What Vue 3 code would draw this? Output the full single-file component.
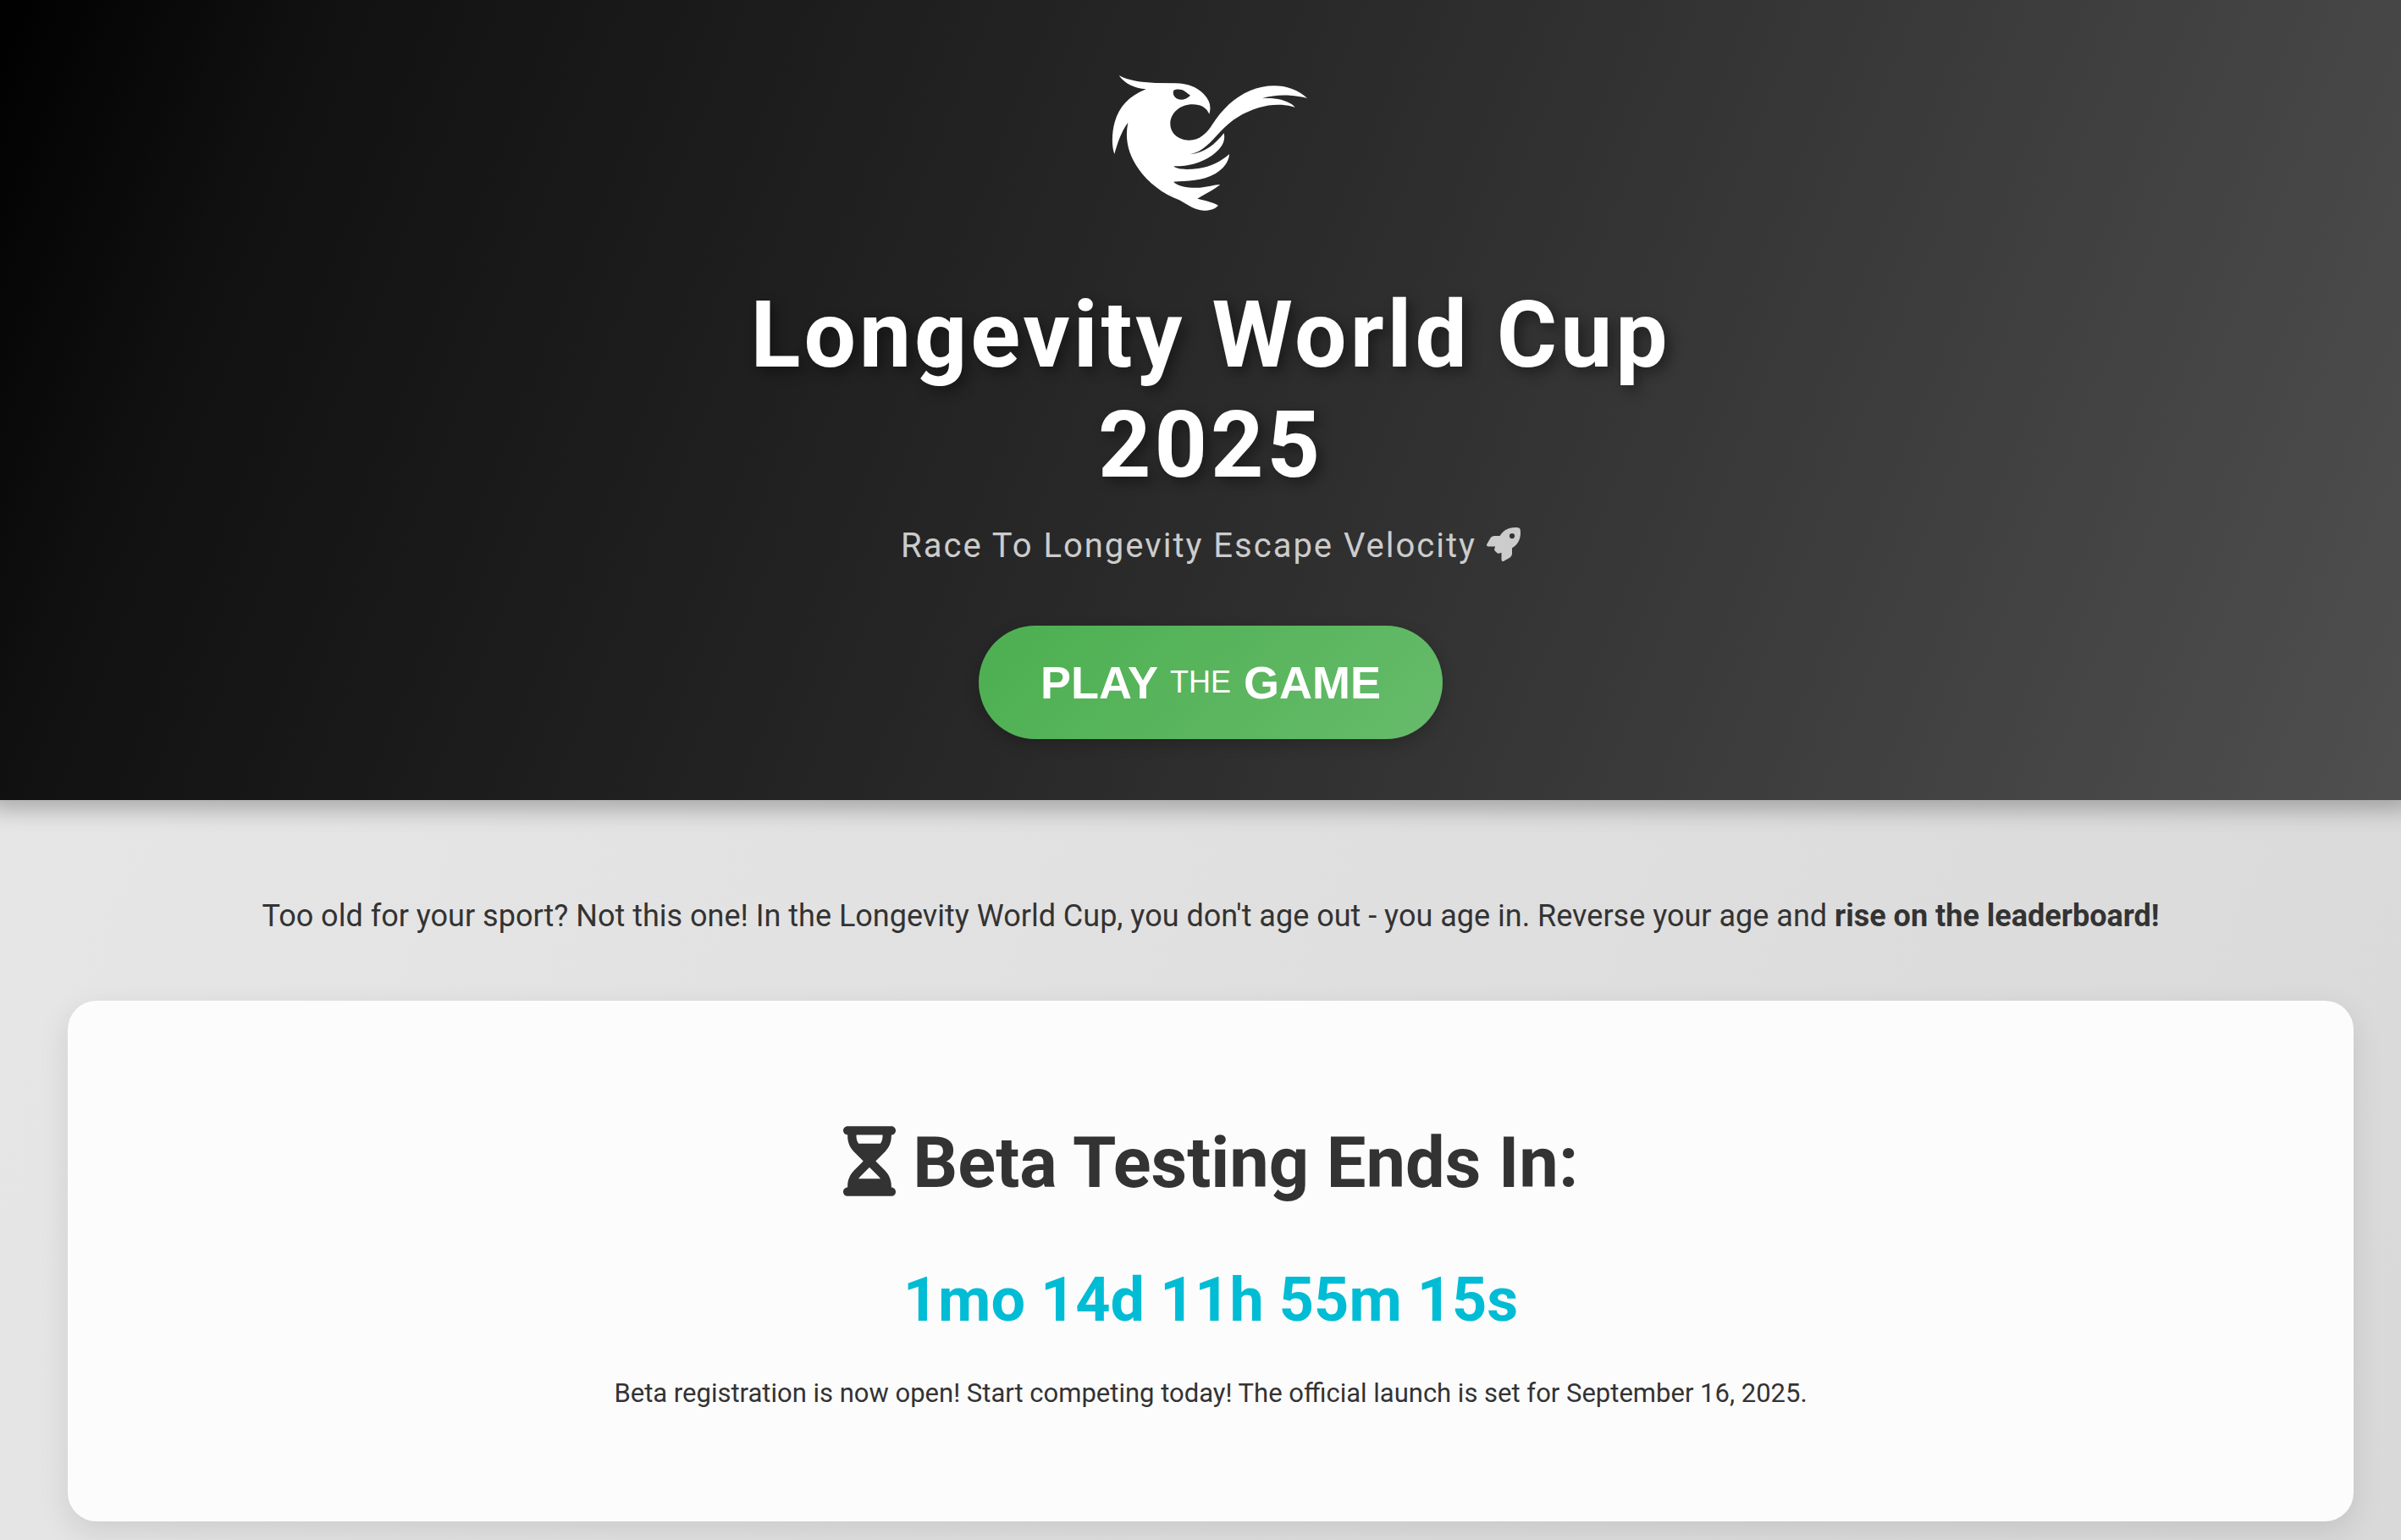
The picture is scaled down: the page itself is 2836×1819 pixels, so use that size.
<script setup>
import { ref, computed } from 'vue'

const remaining = ref({ mo: 1, d: 14, h: 11, m: 55, s: 15 })

const countdown = computed(() =>
  Object.entries(remaining.value)
    .map(([unit, value]) => `${value}${unit}`)
    .join(' '),
)
</script>

<template>
  <div class="page">
    <header class="hero">
      <svg class="logo" viewBox="60 6 720 561" role="img" aria-label="Longevity World Cup logo">
        <!-- head and body -->
        <path
          fill="#fff"
          fill-rule="evenodd"
          d="M95 57 C130 76 170 81 225 84 L295 85 C340 86 372 99 396 124 C417 146 423 168 415 194
            C405 171 385 160 356 160 C312 160 277 190 277 229 C277 262 305 287 343 287
            C382 287 407 261 426 231 C461 177 503 136 560 111 C607 91 664 88 706 104
            C730 113 748 123 762 138 C712 126 655 122 602 139 C645 134 699 145 719 170
            C678 157 632 159 592 171 C536 188 493 215 455 256 C421 293 392 329 346 337
            C400 333 436 300 467 262 C475 295 452 321 423 342 C384 369 335 380 289 379
            C302 392 340 391 376 387 C421 381 456 362 486 336 C485 364 464 389 436 406
            C391 432 339 431 288 434 C305 452 346 457 382 455 C408 453 431 445 454 444
            C431 463 398 478 373 494 C397 500 427 506 447 518 C434 532 415 536 397 536
            C362 536 337 514 309 499 C250 477 197 435 165 389 C128 337 115 284 127 224
            C103 257 90 296 79 336 C68 306 70 259 80 223 C95 169 131 130 191 106
            C150 103 115 86 95 57 Z
            M289 110 C300 104 318 106 328 113 L348 128 C336 141 314 148 299 139 C288 132 285 120 289 110 Z"
        />
      </svg>

      <h1 class="title">Longevity World Cup<br />2025</h1>

      <p class="subtitle">
        Race To Longevity Escape Velocity
        <svg class="rocket" viewBox="0 0 512 512" aria-hidden="true">
          <path
            fill="currentColor"
            d="M156.6 384.900L125.700 354c-8.500-8.500-11.500-20.800-7.700-32.200c3-8.900 7-20.500 11.800-33.800L24 288c-8.600 0-16.600-4.600-20.900-12.100s-4.200-16.700 .2-24.100l52.500-88.500c13-21.900 36.500-35.300 61.900-35.300l82.300 0c2.400-4 4.800-7.700 7.200-11.300C289.100-4.100 411.100-8.100 483.900 5.300c11.600 2.100 20.600 11.200 22.800 22.800c13.400 72.900 9.300 194.800-111.400 276.700c-3.500 2.400-7.300 4.800-11.300 7.200l0 82.300c0 25.400-13.400 49-35.300 61.900l-88.500 52.500c-7.400 4.400-16.600 4.500-24.100 .2s-12.100-12.200-12.100-20.900l0-107.200c-14.100 4.900-26.400 8.900-35.700 11.900c-11.200 3.600-23.400 .5-31.800-7.800zM384 168a40 40 0 1 0 0-80 40 40 0 1 0 0 80z"
          />
        </svg>
      </p>

      <button class="playBtn" type="button">PLAY <span class="the">THE</span> GAME</button>
    </header>

    <main class="content">
      <p class="intro">
        Too old for your sport? Not this one! In the Longevity World Cup, you don't age out - you
        age in. Reverse your age and <strong>rise on the leaderboard!</strong>
      </p>

      <section class="card">
        <h2 class="cardTitle">
          <svg class="hourglass" viewBox="0 0 384 512" aria-hidden="true">
            <path
              fill="currentColor"
              d="M32 0C14.300 0 0 14.300 0 32S14.300 64 32 64l0 11c0 42.400 16.900 83.100 46.900 113.100L146.700 256 78.900 323.900C48.900 353.900 32 394.600 32 437l0 11c-17.700 0-32 14.300-32 32s14.300 32 32 32l320 0c17.700 0 32-14.300 32-32s-14.300-32-32-32l0-11c0-42.400-16.900-83.100-46.900-113.100L237.300 256l67.900-67.900c30-30 46.900-70.700 46.900-113.100l0-11c17.700 0 32-14.300 32-32s-14.300-32-32-32L32 0zM96 75l0-11 192 0 0 11c0 19-5.600 37.400-16 53L112 128c-10.300-15.600-16-34-16-53zm16 309c3.500-5.300 7.600-10.300 12.100-14.900L192 301.300l67.900 67.900c4.600 4.600 8.600 9.600 12.100 14.900L112 384z"
            />
          </svg>
          Beta Testing Ends In:
        </h2>
        <div class="countdown">{{ countdown }}</div>
        <p class="note">
          Beta registration is now open! Start competing today! The official launch is set for
          September 16, 2025.
        </p>
      </section>
    </main>
  </div>
</template>

<style>
body {
  margin: 0;
}
</style>

<style scoped>
.page {
  min-height: 100vh;
  box-sizing: border-box;
  padding-bottom: 22px;
  font-family: Roboto, 'Liberation Sans', sans-serif;
  color: #333;
  background: linear-gradient(112deg, #e8e8e8, #d9d9d9);
}

.hero {
  display: flex;
  flex-direction: column;
  align-items: center;
  padding: 72px 56px 72px 80px;
  color: #fff;
  text-align: center;
  background: linear-gradient(112deg, #000, #111 12%, #2a2a2a 50%, #4f4f4f);
  box-shadow: 0 0 24px 12px rgba(0, 0, 0, 0.25);
}

.logo {
  width: 240px;
  height: 187px;
  margin-bottom: 72px;
}

.title {
  margin: 0 0 30px;
  font-size: 109px;
  line-height: 130px;
  font-weight: 700;
  letter-spacing: 4px;
  text-shadow: 6px 6px 15px rgba(0, 0, 0, 0.4);
}

.subtitle {
  margin: 0 0 70px;
  font-size: 40px;
  line-height: 48px;
  letter-spacing: 2px;
  color: #ccc;
}

.rocket {
  width: 40px;
  height: 40px;
  vertical-align: -5px;
}

.playBtn {
  padding: 36px 73px;
  border: none;
  border-radius: 75px;
  font-family: 'Liberation Sans', Arial, sans-serif;
  font-size: 54px;
  line-height: 62px;
  font-weight: 700;
  color: #fff;
  background: linear-gradient(135deg, #4caf50, #66bb6a);
  box-shadow: 0 6px 18px rgba(0, 0, 0, 0.2);
  cursor: pointer;
}

.playBtn:hover {
  background: linear-gradient(135deg, #43a047, #4caf50);
}

.the {
  font-size: 36px;
  line-height: 36px;
  font-weight: 400;
  vertical-align: 7px;
}

.content {
  padding: 109px 56px 0 80px;
  text-align: center;
}

.intro {
  margin: 0 0 71px;
  font-size: 36px;
  line-height: 57px;
}

.card {
  padding: 142px 72px 127px;
  border-radius: 34px;
  background: #fcfcfc;
  box-shadow: 0 12px 36px rgba(0, 0, 0, 0.1);
}

.cardTitle {
  margin: 0 0 69px;
  font-size: 83px;
  line-height: 100px;
  font-weight: 700;
}

.hourglass {
  width: 62px;
  height: 83px;
  vertical-align: -11px;
}

.countdown {
  margin-bottom: 43px;
  font-size: 72px;
  line-height: 86px;
  font-weight: 700;
  color: #00bcd4;
}

.note {
  margin: 0;
  font-size: 31px;
  line-height: 48px;
}
</style>
